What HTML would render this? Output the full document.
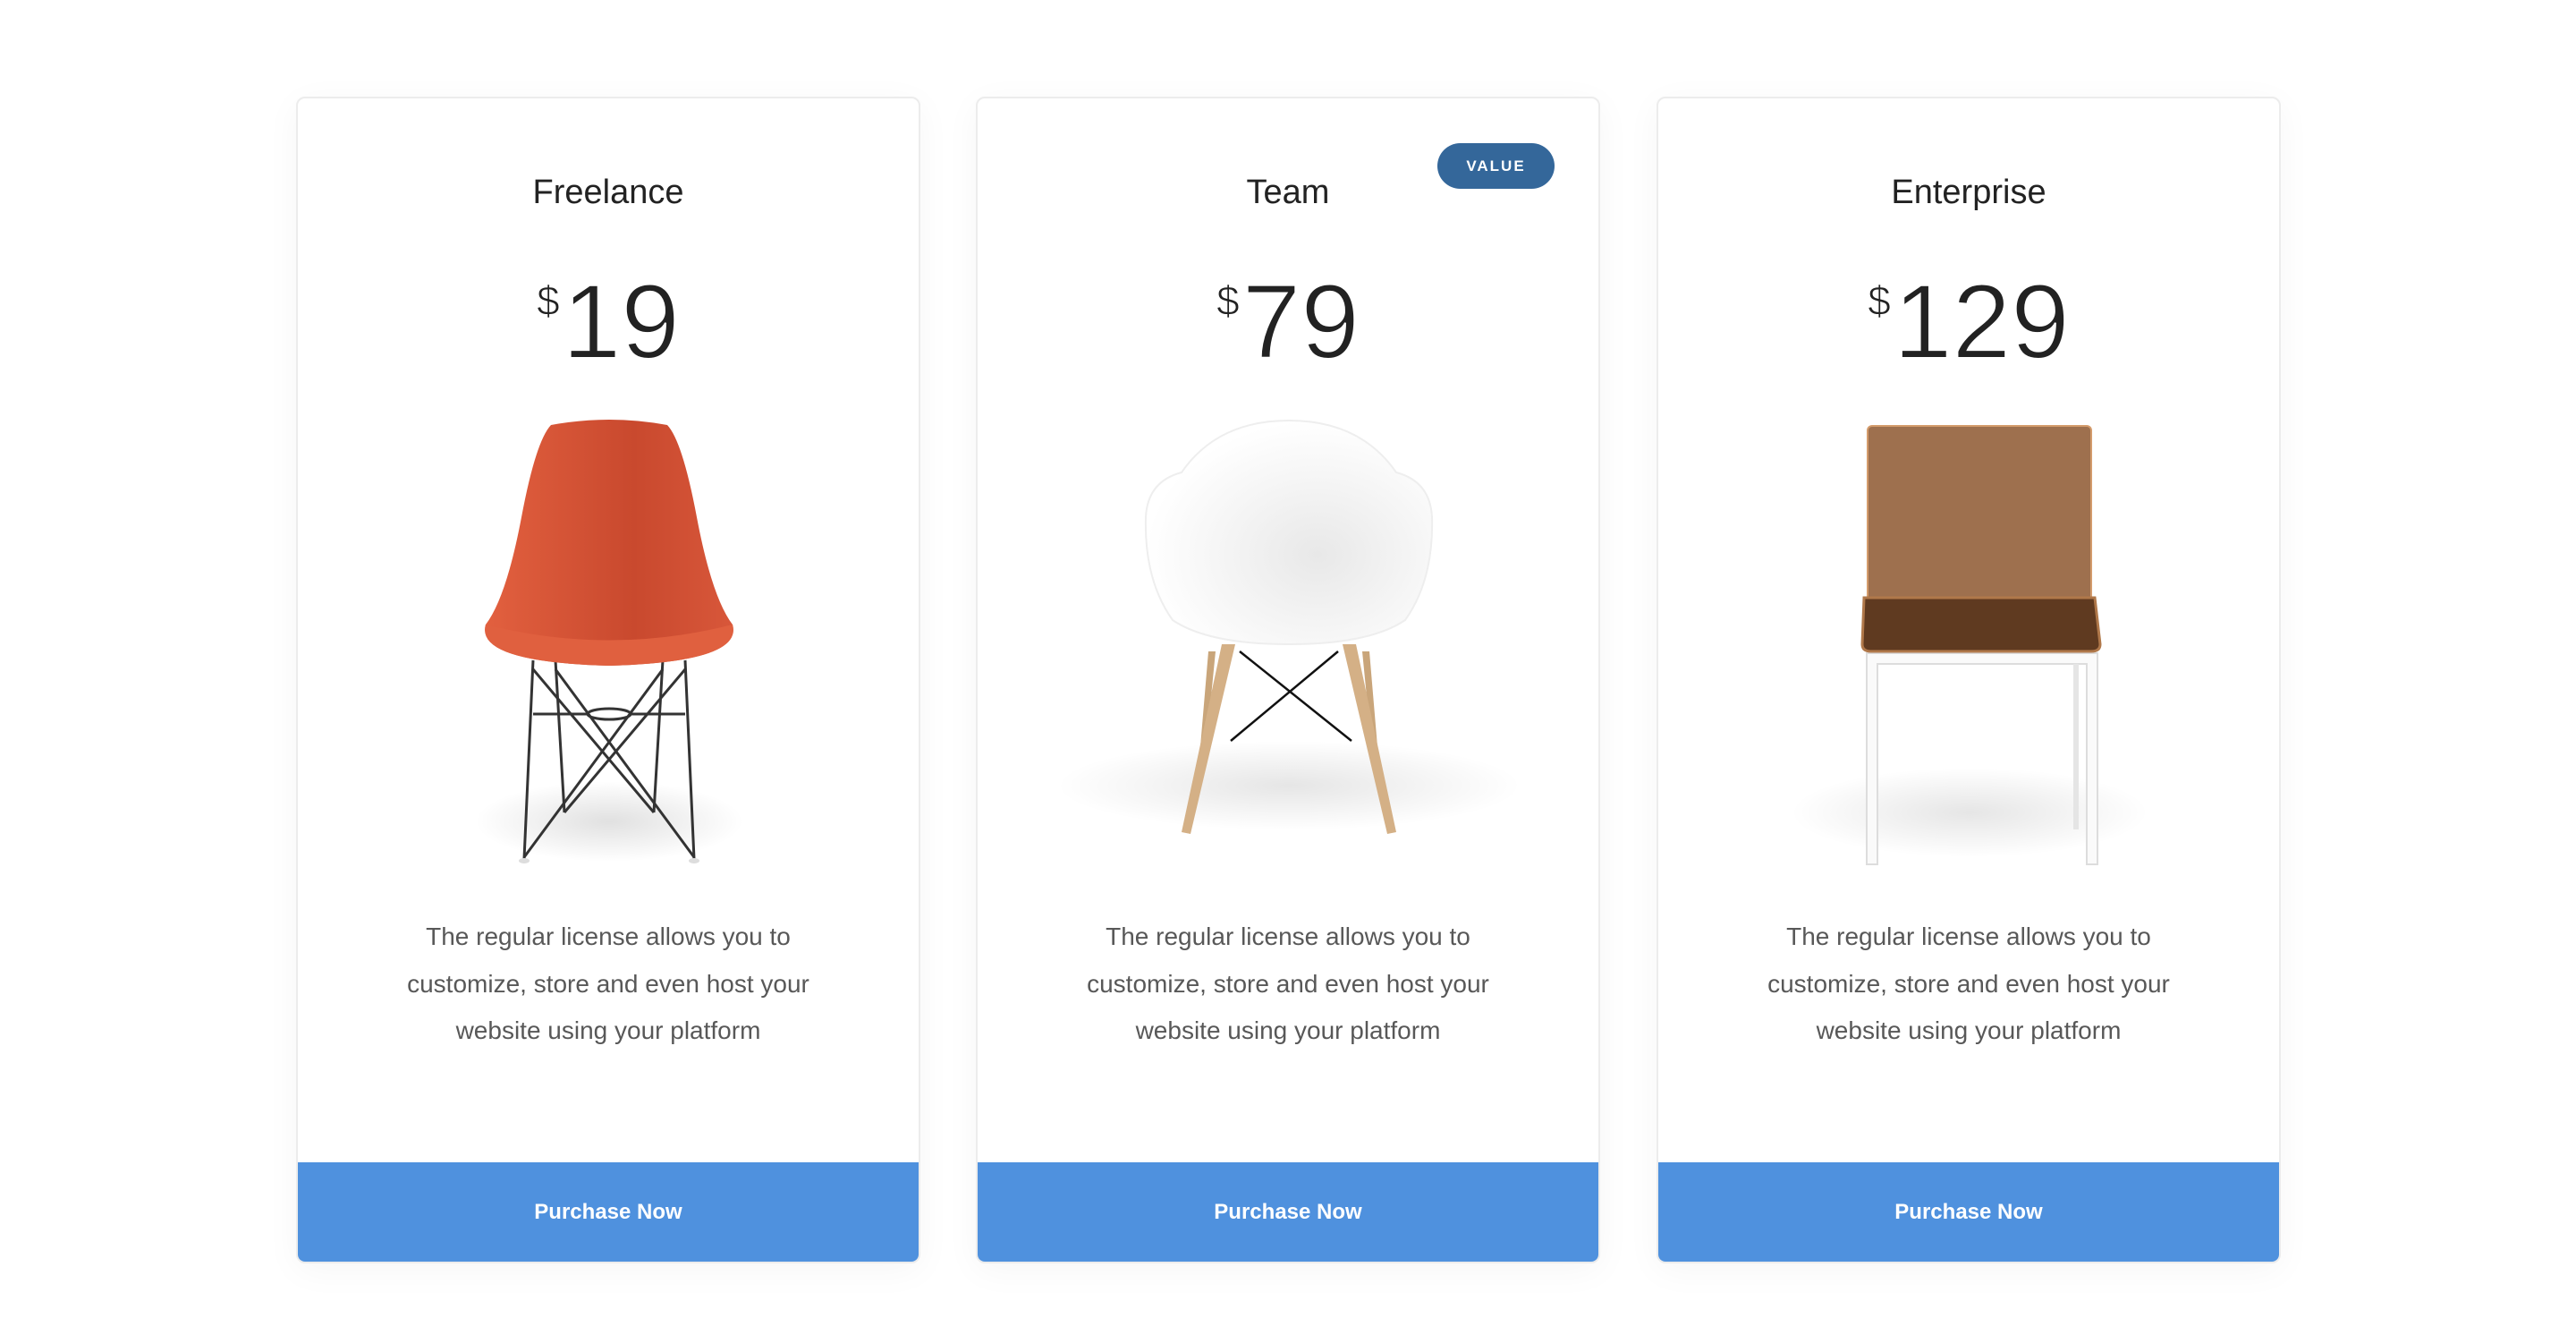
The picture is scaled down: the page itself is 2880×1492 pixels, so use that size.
<!DOCTYPE html>
<html><head><meta charset="utf-8"><style>
html,body{margin:0;padding:0;background:#fff;}
body{width:2880px;height:1492px;position:relative;overflow:hidden;font-family:"Liberation Sans",sans-serif;}
.card{position:absolute;top:108px;width:698px;height:1304px;box-sizing:border-box;border:2px solid #ececec;border-radius:10px;background:#fff;box-shadow:0 8px 40px rgba(0,0,0,0.04);overflow:hidden;}
.title{position:absolute;top:82px;left:0;right:0;text-align:center;font-size:38px;line-height:46px;color:#222;}
.price{position:absolute;top:190px;left:0;right:0;text-align:center;color:#222;font-size:118px;line-height:120px;-webkit-text-stroke:2px #fff;}
.price sup{font-size:46px;position:relative;top:6px;vertical-align:top;margin-right:3px;line-height:60px;-webkit-text-stroke:1px #fff;}
.desc{position:absolute;top:911px;left:0;right:0;text-align:center;font-size:28px;line-height:52.5px;color:#585858;}
.btn{position:absolute;left:0;right:0;bottom:0;height:111px;background:#4f91de;color:#fff;font-weight:bold;font-size:24px;text-align:center;line-height:111px;}
svg{position:absolute;left:-2px;top:-2px;}
.badge{position:absolute;left:514px;top:50px;width:131px;height:51px;border-radius:26px;background:#34679a;color:#fff;font-weight:bold;font-size:17px;letter-spacing:2px;text-align:center;line-height:51px;}
</style></head><body>

<div class="card" style="left:331px">
<svg width="699" height="1306">
<defs>
<radialGradient id="sh" cx="50%" cy="50%" r="50%"><stop offset="0" stop-color="#000" stop-opacity=".12"/><stop offset="1" stop-color="#000" stop-opacity="0"/></radialGradient>
<linearGradient id="or" x1="0" x2="1"><stop offset="0" stop-color="#e2603f"/><stop offset=".6" stop-color="#c9492e"/><stop offset="1" stop-color="#d8573a"/></linearGradient>
</defs>
<ellipse cx="350" cy="810" rx="150" ry="45" fill="url(#sh)"/>
<g stroke="#333" stroke-width="3" fill="none">
<path d="M265,630 L255,852 M435,630 L445,852 M290,630 L300,800 M410,630 L400,800"/>
<path d="M265,640 L400,800 M435,640 L300,800 M290,640 L445,850 M410,640 L255,850"/>
<ellipse cx="350" cy="690" rx="24" ry="6"/>
<path d="M265,690 L326,690 M374,690 L435,690"/>
</g>
<ellipse cx="255" cy="854" rx="6" ry="3" fill="#ddd"/><ellipse cx="445" cy="854" rx="6" ry="3" fill="#ddd"/>
<path d="M285,367 Q350,355 415,367 Q432,385 448,470 Q465,560 488,590 Q500,632 350,636 Q200,632 212,590 Q235,560 252,470 Q268,385 285,367 Z" fill="url(#or)"/>
<path d="M212,590 Q350,625 488,590 Q500,632 350,636 Q200,632 212,590Z" fill="#e0603f"/>
</svg>
<div class="title">Freelance</div>
<div class="price"><sup>$</sup>19</div>
<div class="desc">The regular license allows you to<br>customize, store and even host your<br>website using your platform</div>
<div class="btn">Purchase Now</div>
</div>

<div class="card" style="left:1091px">
<svg width="699" height="1306">
<defs>
<radialGradient id="sh2" cx="50%" cy="50%" r="50%"><stop offset="0" stop-color="#000" stop-opacity=".1"/><stop offset="1" stop-color="#000" stop-opacity="0"/></radialGradient>
<radialGradient id="wh" cx="60%" cy="60%" r="60%"><stop offset="0" stop-color="#e8e8e8"/><stop offset=".6" stop-color="#f6f6f6"/><stop offset="1" stop-color="#fff"/></radialGradient>
</defs>
<ellipse cx="350" cy="770" rx="260" ry="50" fill="url(#sh2)"/>
<g stroke="#111" stroke-width="2.5">
<path d="M295,620 L420,720 M405,620 L285,720"/>
</g>
<path d="M248,762 L260,620 L268,620 L254,762Z" fill="#c9a57a"/>
<path d="M452,762 L440,620 L432,620 L446,762Z" fill="#c9a57a"/>
<path d="M230,822 L275,612 L290,612 L240,824Z" fill="#d4b086"/>
<path d="M470,822 L425,612 L410,612 L460,824Z" fill="#d4b086"/>
<path d="M350,362 Q430,362 470,420 Q508,430 510,470 Q512,540 480,585 Q440,612 350,612 Q260,612 220,585 Q188,540 190,470 Q192,430 230,420 Q270,362 350,362Z" fill="url(#wh)" stroke="#eee" stroke-width="2"/>
</svg>
<div class="badge">VALUE</div>
<div class="title">Team</div>
<div class="price"><sup>$</sup>79</div>
<div class="desc">The regular license allows you to<br>customize, store and even host your<br>website using your platform</div>
<div class="btn">Purchase Now</div>
</div>

<div class="card" style="left:1852px">
<svg width="699" height="1306">
<defs>
<radialGradient id="sh3" cx="50%" cy="50%" r="50%"><stop offset="0" stop-color="#000" stop-opacity=".1"/><stop offset="1" stop-color="#000" stop-opacity="0"/></radialGradient>
</defs>
<ellipse cx="350" cy="800" rx="200" ry="50" fill="url(#sh3)"/>
<path d="M235,622 L235,858 L247,858 L247,634 L481,634 L481,858 L493,858 L493,622Z" fill="#fafafa" stroke="#ddd" stroke-width="2"/>
<rect x="466" y="634" width="6" height="185" fill="#e5e5e5"/>
<rect x="236" y="368" width="250" height="200" rx="5" fill="#9e704e" stroke="#d49c6c" stroke-width="2"/>
<path d="M232,560 L490,560 L496,612 Q496,620 486,620 L240,620 Q230,620 230,612Z" fill="#5f3a20" stroke="#b0784a" stroke-width="3"/>
</svg>
<div class="title">Enterprise</div>
<div class="price"><sup>$</sup>129</div>
<div class="desc">The regular license allows you to<br>customize, store and even host your<br>website using your platform</div>
<div class="btn">Purchase Now</div>
</div>

</body></html>
